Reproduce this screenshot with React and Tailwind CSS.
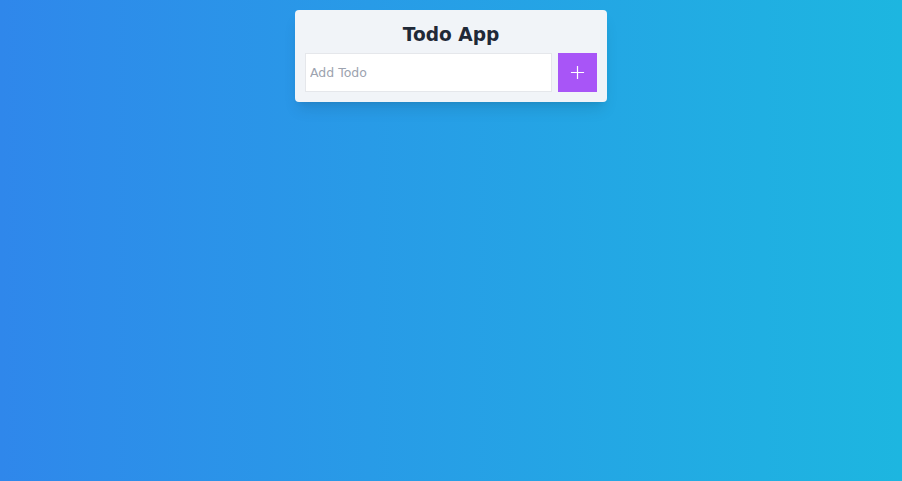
import React, { useState } from 'react';

export default function App() {
  const [todo, setTodo] = useState('');

  return (
    <div className="min-h-screen w-full bg-gradient-to-r from-[#2f87eb] to-[#1db6e0] font-['DejaVu_Sans',sans-serif]">
      <div className="flex justify-center pt-2.5">
        {/* Card */}
        <div className="w-[312px] bg-[#f1f4f8] rounded p-2.5 shadow-lg">
          <h1 className="text-[18.6px] leading-7 pt-px font-bold text-center text-[#1f2937] mb-[4px]">Todo App</h1>
          <div className="flex gap-1.5">
            <input
              value={todo}
              onChange={(e) => setTodo(e.target.value)}
              placeholder="Add Todo"
              className="flex-1 min-w-0 h-[39px] bg-white border border-[#e5e7eb] px-1 text-[12.5px] text-gray-700 placeholder:text-[#9ca3af] outline-none"
            />
            <button className="w-[39px] h-[39px] bg-[#a855f7] flex items-center justify-center">
              <svg width="15" height="15" viewBox="0 0 16 16" fill="none" stroke="white" strokeWidth="1.3">
                <path d="M8 1v14M1 8h14" />
              </svg>
            </button>
          </div>
        </div>
      </div>
    </div>
  );
}
